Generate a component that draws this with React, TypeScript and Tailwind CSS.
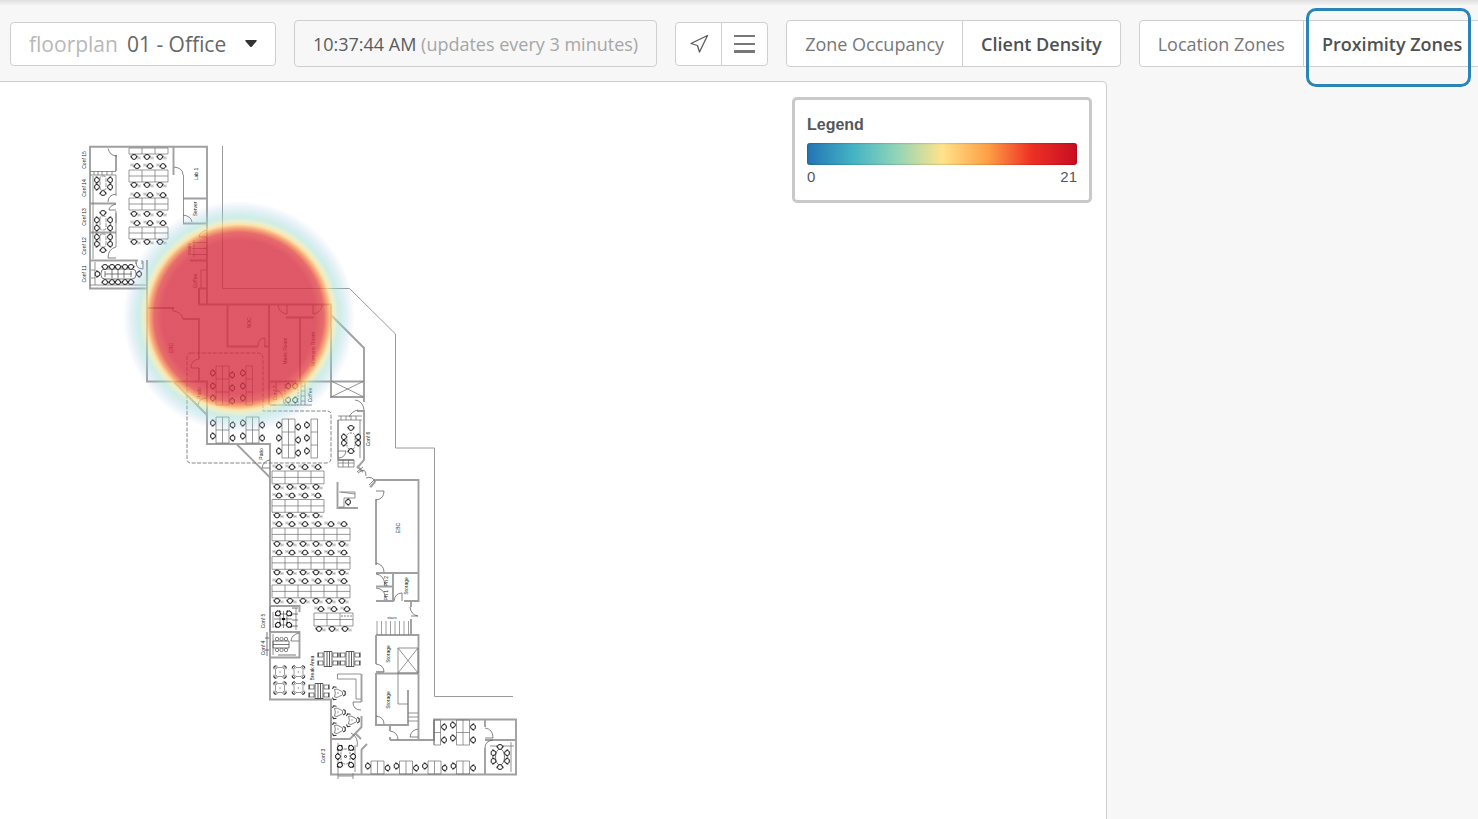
import { clsx } from "clsx";

type Point = [number, number];

const chairPath =
  "M-1.5 -2.3H1.5L2.5 -.6L1.7 1.9Q0 2.9 -1.7 1.9L-2.5 -.6Z M-3.2 -1.2L-2.6 .9 M3.2 -1.2L2.6 .9";

function Chair({ at, turn = 0 }: { at: Point; turn?: number }) {
  return (
    <path
      d={chairPath}
      transform={`translate(${at[0]} ${at[1]}) rotate(${turn})`}
      fill="#fff"
      stroke="#1c1c1c"
      strokeWidth="1"
    />
  );
}

function Chairs({ xs, ys, turn = 0 }: { xs: number[]; ys: number[]; turn?: number }) {
  return (
    <>
      {ys.map((y) => xs.map((x) => <Chair key={`${x}-${y}`} at={[x, y]} turn={turn} />))}
    </>
  );
}

// Chairs with the tiny seat number next to each of them
function NumberedChairs({ xs, ys, side }: { xs: number[]; ys: number[]; side: 1 | -1 }) {
  return (
    <>
      <Chairs xs={xs} ys={ys} turn={side === 1 ? 0 : 180} />
      {ys.map((y) =>
        xs.map((x) => (
          <path
            key={`${x}-${y}`}
            d={`M${x + side * 5 - 1} ${y + side - 1.5}v3m2 -3v3m-2 -1.500h2`}
            stroke="#8a8a8a"
            strokeWidth=".6"
          />
        ))
      )}
    </>
  );
}

function Desks({ x, y, w, h, cols, rows }: { x: number; y: number; w: number; h: number; cols: number; rows: number }) {
  let d = "";
  for (let c = 0; c <= cols; c++) d += `M${x + c * w} ${y}v${h * rows}`;
  for (let r = 0; r <= rows; r++) d += `M${x} ${y + r * h}h${w * cols}`;
  return <path d={d} stroke="#6f6f6f" strokeWidth=".7" />;
}

// Square cafe table with a seat on every corner
function CafeTable({ at }: { at: Point }) {
  return (
    <g transform={`translate(${at[0]} ${at[1]})`} stroke="#333">
      <path d="M-4.500 -2.500L-2.500 -4.500H2.500L4.500 -2.500V2.500L2.500 4.500H-2.500L-4.500 2.500Z" strokeWidth=".5" />
      <path
        d="M-6.300 -3.500Q-6.300 -6.300 -3.500 -6.300M6.300 -3.500Q6.300 -6.300 3.500 -6.300M-6.300 3.500Q-6.300 6.300 -3.500 6.300M6.300 3.500Q6.300 6.300 3.500 6.300"
        strokeWidth="1.100"
      />
      <path d="M-5.800 -2.600L-2.600 -5.800M5.800 -2.600L2.600 -5.800M-5.800 2.600L-2.600 5.800M5.800 2.600L2.600 5.800" strokeWidth=".6" />
      <circle r=".4" strokeWidth=".4" />
    </g>
  );
}

function Bench({ at }: { at: Point }) {
  return (
    <g transform={`translate(${at[0]} ${at[1]})`} stroke="#333" strokeWidth=".8">
      <path d="M-4 -7.5H4V7.5H-4ZM-1 -7.5V7.5M1.5 -7.5V7.5" />
      <path d="M-9.5 -6H-5V-2H-9.5ZM-9.5 2H-5V6H-9.5ZM5 -6H9.5V-2H5ZM5 2H9.5V6H5Z" strokeWidth=".6" />
      <path d="M-10 -6.500V-1.500M-10 1.500V6.500M10 -6.500V-1.500M10 1.500V6.500" strokeWidth="1" />
    </g>
  );
}

function TriTable({ at }: { at: Point }) {
  return (
    <g transform={`translate(${at[0]} ${at[1]})`} stroke="#333">
      <path d="M-3.500 -3.500L-1 -4L4.500 -1.200V1.800L-1 4.500L-3.500 4Q-1.800 0 -3.500 -3.500Z" strokeWidth=".6" />
      <path d="M-5.500 -4L-4.500 -6.200L-1.500 -5.800M-5.500 4.500L-4.500 6.700L-1.500 6.200M5.200 -2.500L7.200 -1.500V1.800L5.200 3" strokeWidth="1.100" />
      <circle r=".4" strokeWidth=".4" />
    </g>
  );
}

function Label({ x, y, children }: { x: number; y: number; children: string }) {
  return (
    <text
      transform={`translate(${x} ${y}) rotate(-90)`}
      textAnchor="middle"
      fontSize="5"
      fill="#222"
      fontFamily='"Liberation Sans", Arial, sans-serif'
    >
      {children}
    </text>
  );
}

const seats4 = [277, 290, 303, 316];
const seats6 = [...seats4, 329, 342];
const shift = (xs: number[], by: number) => xs.map((x) => x + by);

function FloorPlan() {
  return (
    <svg viewBox="76 138 448 646" className="block w-[448px] max-w-full" fill="none" role="img" aria-label="01 - Office floorplan">
      <defs>
        <radialGradient id="density" gradientUnits="userSpaceOnUse" cx="239" cy="317" r="116">
          <stop offset="0" stopColor="#d62c40" stopOpacity=".79" />
          <stop offset=".66" stopColor="#d62c40" stopOpacity=".79" />
          <stop offset=".73" stopColor="#e04040" stopOpacity=".77" />
          <stop offset=".768" stopColor="#f58a4a" stopOpacity=".75" />
          <stop offset=".8" stopColor="#fdd988" stopOpacity=".72" />
          <stop offset=".825" stopColor="#d8e2a8" stopOpacity=".55" />
          <stop offset=".86" stopColor="#9fdccb" stopOpacity=".5" />
          <stop offset=".91" stopColor="#93d0dc" stopOpacity=".32" />
          <stop offset=".96" stopColor="#8fb8dc" stopOpacity=".12" />
          <stop offset="1" stopColor="#7fa8d8" stopOpacity="0" />
        </radialGradient>
      </defs>

      {/* Property line */}
      <path d="M222.5 146V288.5H349.5L395.5 334V448H434.5V696.5H513" stroke="#9a9a9a" />

      {/* Walls */}
      <g stroke="#a0a0a0" strokeWidth="1.9">
        <path d="M147 288.5H90V146.8H207V304M90 203.5H116M90 232.5H116M90 260.5H138M147 260V381.5H207V444H270V699.5H331V774.5H516V719.5H434V740H390M116 155V171M173.5 147V175M183.5 198.5H207M183 223.5H207M190 260.5H207M199 288.5H207M199 288V304.5H331V381M147 308H174M183 319H199V359M199 368V381M207 381V408M227.5 304V346.5H258M264 346.5H269M269 304V405M300 317.5V381M286 317.5H314M269 381.5H364M331 315L364 348V397H331V381M174 382L207 415M237 444.5L270 477.5M270 405H276" />
        <path d="M364 397V402M357 411H364V460L357 468M363 472L357 466M371 487L376 480H418.5V601H404M376 499V565M376 573H418M376 586.5H393M376 601H393V573M411 601V607M411 619V634M376 635H418.5V740H411M376 635V664M376 673.5H418M376 673V725H408V690M376 672H384M370 487L375 482" />
        <path d="M338 420V460M338 460H354M337.500 482V508H358M270 606H299.500V612M270 632H299.500V657.500H270M299.500 643V657M331 739H350L361.500 727V716M361.500 702V674M331 699V740M355 733L361 739M361.500 750V774M361 750L367 744M390 725V731M485 719V727M485 740H516M485 748V774M390 740V737M376 725V715" />
      </g>

      {/* Thin partitions, counters and elevators */}
      <g stroke="#777" strokeWidth=".8">
        <path d="M93 176V259M90 175H116M90 171.500H116M94 171V175M98 171V175M102 171V175M107 171V175M112 171V175M183.500 175V223M116 175V196M116 213V223M116 211V247M90 285H147M91 270H95M91 278H95M95 262V285M136 260V264M142 260V264M201 270V288M201 270H207M199 288V304M192 242.500H207M192 248.500H207M192 254.500H207M194 240V257" />
        <path d="M331 381L364 397M331 397L364 381M398 648H418V673H398ZM398 648L418 673M398 673L418 648M398 673V704H408M408 713H418M408 717H418M408 721H418M337.500 674V679H356V699H361M337.500 674H361" />
        <path d="M377 621V635M381.500 621V635M386 621V635M390.500 621V635M395 621V635M399.500 621V635M404 621V635M408.500 621V635" strokeWidth=".7" />
        <path d="M338 460H354V467H338ZM343 460V467M348.500 460V467M338 463H354M339 492H355V498H344V507H339M341 492L355 494M338 416H362M338 420H362M341 416V420M346 416V420M351 416V420M356 416V420M360 420V458" />
        <path d="M276 405H312M301 381V405M305 381V405M301 386H305M301 391H305M301 396H305M301 401H305M276 382V390M296 608V630M273 612V628M273 634V655M270 606V632M434 720V745M490 746H514M511 742V772M338 743V773M355 745V772M338 776H353M338 773V779M353 773V779" />
      </g>

      {/* Doors */}
      <g stroke="#666" strokeWidth=".8">
        <path d="M108 148.500Q110 156 117 156M116 247Q108 249 108 258H116M116 194Q108 195 108 202M116 204Q109 206 109 210H116M174 167Q183 168 183 175M183 215Q191 216 192 222M207 230Q199 232 199 237H207M136 262Q136 269 143 269V261M173 308V311Q182 312 183 319M191 368Q191 360 199 359M191 368H199M258 346Q258 338 265 338V346M278 305Q279 313 287 314V305M322 305Q321 313 313 314V305" />
        <path d="M198 405Q199 398 207 398M262 468Q263 461 270 460M262 468H270M376 500Q384 499 384 491H376M376 563Q384 565 384 572M376 574Q384 575 385 585M376 588Q385 589 385 597M394 601Q395 593 402 593V601M410 607Q411 615 418 616H411M376 664Q384 665 384 672M299 633Q291 635 291 641H299M376 716Q384 717 384 724M390 731Q398 732 398 740M418 729Q411 730 410 737H418M353 702Q353 710 361 710M353 702H361M485 728Q493 729 493 738H485M493 740Q485 741 485 748" />
        <path d="M355 400Q363 401 364 410M349 417Q352 411 358 410M338 458Q345 458 346 451H338M358 473Q366 466 366 476M366 478Q372 476 375 481M357 472L363 467M369 485L375 479M351 733Q359 737 357 747M276 390Q283 391 284 404" />
      </g>

      {/* Patio awnings */}
      <path
        d="M191 353H258Q263 353 263 358V411H327Q331 411 331 415V458Q331 463 326 463H191Q187 463 187 459V357Q187 353 191 353"
        stroke="#777"
        strokeWidth=".9"
        strokeDasharray="4 1.500"
      />

      {/* North wing */}
      <Desks x={129} y={148} w={13} h={6} cols={3} rows={1} />
      <Desks x={129} y={170} w={13} h={6} cols={3} rows={2} />
      <Desks x={129} y={198} w={13} h={6} cols={3} rows={2} />
      <Desks x={129} y={227} w={13} h={6} cols={3} rows={2} />
      <NumberedChairs xs={[134, 147, 160]} ys={[157, 185, 214, 242]} side={1} />
      <NumberedChairs xs={[137, 150, 163]} ys={[166, 195, 223]} side={-1} />
      <Chairs xs={[97]} ys={[180, 187, 220, 228, 237, 244]} turn={-90} />
      <Chairs xs={[110]} ys={[180, 187, 220, 228, 237, 244]} turn={90} />
      <Chair at={[103, 193]} turn={180} />
      <Chair at={[103, 213]} />
      <Chair at={[103, 250]} turn={180} />
      <g stroke="#666" strokeWidth=".7" strokeDasharray="4 1">
        <rect x="100" y="176" width="6" height="14" rx="2" />
        <rect x="100" y="216" width="6" height="14" rx="2" />
        <rect x="100" y="234" width="6" height="13" rx="2" />
      </g>
      <rect x="101" y="269" width="35" height="10" rx="4" stroke="#555" strokeWidth=".8" />
      <path d="M105 274H132M105 271V277M112 270V278M118 270V278M124 270V278M131 271V277" stroke="#555" strokeWidth=".8" />
      <Chairs xs={[105, 112, 118, 125, 131]} ys={[267]} />
      <Chairs xs={[105, 112, 118, 125, 131]} ys={[282]} turn={180} />
      <Chair at={[97.5, 274]} turn={-90} />
      <Chair at={[139, 274]} turn={90} />

      {/* Patio desks */}
      <Desks x={216} y={366} w={6.5} h={13} cols={2} rows={3} />
      <Desks x={246} y={366} w={6.5} h={13} cols={1} rows={3} />
      <Chairs xs={[213, 243]} ys={[373, 386, 398]} turn={-90} />
      <Chairs xs={[232]} ys={[375, 388, 401]} turn={90} />
      <Desks x={216} y={417} w={6.5} h={13} cols={2} rows={2} />
      <Desks x={246} y={417} w={6.5} h={13} cols={2} rows={2} />
      <Chairs xs={[213, 243]} ys={[423, 436]} turn={-90} />
      <Chairs xs={[232.5, 262]} ys={[425, 438]} turn={90} />
      <Desks x={282} y={419} w={6.5} h={13} cols={2} rows={3} />
      <Desks x={311} y={419} w={6.5} h={13} cols={1} rows={3} />
      <Chairs xs={[279, 307]} ys={[425, 438, 451]} turn={-90} />
      <Chairs xs={[298]} ys={[427, 440, 453]} turn={90} />
      <Chairs xs={[288, 295]} ys={[386, 400]} turn={90} />
      <rect x="285" y="381" width="13" height="24" stroke="#666" strokeWidth=".7" strokeDasharray="2 1" />

      {/* Conf 6 and reception */}
      <rect x="347" y="433" width="8" height="16" rx="3" stroke="#666" strokeWidth=".8" strokeDasharray="2 1" />
      <Chairs xs={[344]} ys={[437, 443]} turn={-90} />
      <Chairs xs={[358]} ys={[437, 443]} turn={90} />
      <Chair at={[351, 428]} />
      <Chair at={[351, 451]} turn={180} />
      <Chair at={[348, 502]} turn={90} />

      {/* Main open area */}
      {[471, 499.5].map((y) => (
        <g key={y}>
          <Desks x={272} y={y} w={13} h={6.4} cols={4} rows={2} />
          <NumberedChairs xs={shift(seats4, 2)} ys={[y - 4]} side={-1} />
          <NumberedChairs xs={seats4} ys={[y + 16]} side={1} />
        </g>
      ))}
      {[528, 556.5, 585].map((y) => (
        <g key={y}>
          <Desks x={272} y={y} w={13} h={6.4} cols={6} rows={2} />
          <NumberedChairs xs={shift(seats6, 2)} ys={[y - 4]} side={-1} />
          <NumberedChairs xs={seats6} ys={[y + 16]} side={1} />
        </g>
      ))}
      <Desks x={314} y={613} w={13} h={6.500} cols={3} rows={2} />
      <NumberedChairs xs={[321, 334, 347]} ys={[609]} side={-1} />
      <NumberedChairs xs={[319, 332, 345]} ys={[629]} side={1} />
      <path d="M342 615v2m3 -2v2m3 -2v2m3 -2v2" stroke="#666" strokeWidth=".8" />

      {/* Conf 5 and Conf 4 */}
      <path d="M280 614H287V625H280ZM274 619H292M283.500 611V628" stroke="#555" strokeWidth=".7" />
      <Chairs xs={[278]} ys={[613.5, 625]} turn={-45} />
      <Chairs xs={[289]} ys={[613.5, 625]} turn={45} />
      <path d="M282 619h3" stroke="#111" strokeWidth="2.200" />
      <path d="M273 641H289V648H273ZM273 644.500H289M267 632V656M265 638H269M265 650H269M278 655H296M292 608H298M292 614H298M292 620H298M292 626H298" stroke="#555" strokeWidth=".8" />
      <g stroke="#666" strokeWidth=".8">
        {[277, 281.5, 286].map((x) => (
          <g key={x}>
            <circle cx={x} cy="639" r="1.700" />
            <circle cx={x} cy="650" r="1.700" />
          </g>
        ))}
      </g>

      {/* Break area */}
      <CafeTable at={[280, 672]} />
      <CafeTable at={[298.5, 672]} />
      <CafeTable at={[280, 688]} />
      <CafeTable at={[298.5, 688]} />
      <Bench at={[328, 659]} />
      <Bench at={[350, 659]} />
      <Bench at={[319, 691]} />
      <TriTable at={[338, 693]} />
      <TriTable at={[338, 712]} />
      <TriTable at={[352, 720]} />
      <TriTable at={[338, 729]} />

      {/* Conf 3 and south wing */}
      <rect x="341" y="749" width="9" height="15" rx="4" stroke="#555" strokeWidth=".8" strokeDasharray="2 1" />
      <circle cx="345.500" cy="756.500" r="1" stroke="#222" />
      <Chairs xs={[340]} ys={[748, 765]} turn={-45} />
      <Chairs xs={[351]} ys={[748, 765]} turn={45} />
      <Chair at={[338, 756.5]} turn={-90} />
      <Chair at={[353, 756.5]} turn={90} />
      {[371, 399.5, 428, 456.5].map((x) => (
        <g key={x}>
          <Desks x={x} y={761} w={6.5} h={13} cols={2} rows={1} />
          <Chair at={[x - 3, 766]} turn={-90} />
          <Chair at={[x + 16.5, 768]} turn={90} />
        </g>
      ))}
      <Desks x={434} y={720} w={6.500} h={12.500} cols={1} rows={2} />
      <Desks x={456.500} y={720} w={6.500} h={12.500} cols={2} rows={2} />
      <Chairs xs={[444, 473]} ys={[727, 740]} turn={90} />
      <Chairs xs={[453]} ys={[725, 738]} turn={-90} />
      <ellipse cx="500" cy="757" rx="4.500" ry="8" stroke="#555" strokeWidth=".8" />
      <Chairs xs={[493.5]} ys={[753, 761]} turn={-90} />
      <Chairs xs={[507]} ys={[753, 761]} turn={90} />
      <Chair at={[500, 747]} />
      <Chair at={[500, 767]} turn={180} />

      <Label x={86} y={160}>Conf 15</Label>
      <Label x={86} y={188}>Conf 14</Label>
      <Label x={86} y={217}>Conf 13</Label>
      <Label x={86} y={246}>Conf 12</Label>
      <Label x={86} y={274}>Conf 11</Label>
      <Label x={198} y={174}>Lab 1</Label>
      <Label x={197} y={209}>Server</Label>
      <Label x={191} y={249}>stairs</Label>
      <Label x={197} y={281}>Coffee</Label>
      <Label x={173} y={348}>EBC</Label>
      <Label x={251} y={323}>NOC</Label>
      <Label x={287} y={351}>Mens Room</Label>
      <Label x={315} y={349}>Womens Room</Label>
      <Label x={201} y={393}>Patio</Label>
      <Label x={277} y={393}>Conf 7</Label>
      <Label x={312} y={395}>Coffee</Label>
      <Label x={263} y={454}>Patio</Label>
      <Label x={370} y={439}>Conf 6</Label>
      <Label x={400} y={528}>EBC</Label>
      <Label x={388} y={581}>Ph 2</Label>
      <Label x={388} y={595}>Ph 1</Label>
      <Label x={408} y={586}>Storage</Label>
      <Label x={265} y={621}>Conf 5</Label>
      <Label x={265} y={648}>Conf 4</Label>
      <Label x={314} y={668}>Break Area</Label>
      <Label x={390} y={654}>Storage</Label>
      <Label x={390} y={700}>Storage</Label>
      <Label x={325} y={756}>Conf 3</Label>
      <text x="392" y="619" textAnchor="middle" fontSize="4" fill="#333" fontFamily='"Liberation Sans", Arial, sans-serif'>
        stairs
      </text>

      <circle cx="239" cy="317" r="116" fill="url(#density)" />
    </svg>
  );
}

function Segmented({ label, options, active }: { label: string; options: string[]; active: string }) {
  return (
    <div role="group" aria-label={label} className="flex h-[47px] shrink-0 overflow-hidden rounded border border-[#cfcfcf] bg-white">
      {options.map((option, i) => (
        <button
          key={option}
          type="button"
          aria-pressed={option === active}
          className={clsx(
            "px-[18px] whitespace-nowrap",
            i > 0 && "border-l border-[#cfcfcf]",
            option === active ? "font-semibold text-[#4f5151]" : "text-[#777]"
          )}
        >
          {option}
        </button>
      ))}
    </div>
  );
}

function Toolbar() {
  return (
    <header className="relative flex items-center gap-[18px] bg-linear-to-b from-[#dfdfdf] to-[#f7f7f7] to-[6px] pt-5 pb-[14px] pl-[10px] text-[18px] leading-6">
      <label className="relative flex h-[44px] shrink-0 items-center rounded border border-[#cfcfcf] bg-white pl-[18px] text-[21px] text-[#b8b8b8]">
        floorplan
        <select className="h-full w-[157px] appearance-none bg-transparent pl-[9px] text-[#666] outline-none" defaultValue="01">
          <option value="01">01 - Office</option>
        </select>
        <svg className="pointer-events-none absolute right-[18px] h-2 w-3" viewBox="0 0 12 8" fill="#333" aria-hidden="true">
          <path d="M1 0H11Q12.500 0 11.500 1.200L7 6.500Q6 7.500 5 6.500L.5 1.200Q-.5 0 1 0Z" />
        </svg>
      </label>

      <div className="flex h-[47px] shrink-0 items-center rounded border border-[#cfcfcf] px-[18px] whitespace-pre text-[#a6a6a6]">
        <time className="text-[#5a5c5c]">10:37:44 AM</time> (updates every 3 minutes)
      </div>

      <div className="flex h-[44px] shrink-0 rounded border border-[#cfcfcf] bg-white">
        <button type="button" aria-label="Locate" className="flex w-[45px] items-center justify-center">
          <svg className="size-[20px]" viewBox="0 0 20 20" fill="none" stroke="#5a5a5a" strokeWidth="1.300" aria-hidden="true">
            <path d="M2 9.500L18.500 1.500L10.500 18L8.500 11.500Z" strokeLinejoin="round" />
          </svg>
        </button>
        <button type="button" aria-label="Menu" className="flex w-[46px] items-center justify-center border-l border-[#cfcfcf]">
          <svg className="h-[18px] w-[21px]" viewBox="0 0 21 18" fill="#777" aria-hidden="true">
            <path d="M0 0H21V2H0ZM0 8H21V10H0ZM0 15H21V18H0Z" />
          </svg>
        </button>
      </div>

      <Segmented label="Map data" options={["Zone Occupancy", "Client Density"]} active="Client Density" />
      <Segmented label="Zone type" options={["Location Zones", "Proximity Zones"]} active="Proximity Zones" />

      {/* Tour highlight around the current step */}
      <div className="pointer-events-none absolute top-2 right-[7px] h-[79px] w-[165px] rounded-[10px] border-3 border-[#2b84b8]" />
    </header>
  );
}

function Legend() {
  return (
    <section className="absolute top-[15px] right-[14px] w-[300px] rounded-[5px] border-3 border-[#c9c9c9] bg-white px-3 pt-3 pb-[14px] font-['Liberation_Sans',Arial,sans-serif] text-[#54585a]">
      <h2 className="text-[16px] leading-[26px] font-bold">Legend</h2>
      <div className="mt-[5px] h-[22px] rounded-[3px] bg-[linear-gradient(90deg,#2274b5,#43b3c5_17%,#8fd5b8_33%,#ffe38a_50%,#fe9f45_67%,#ee3124_83%,#c90c22)] inset-shadow-[0_0_2px_rgba(0,0,0,0.4)]" />
      <div className="flex justify-between pt-[3px] text-[15px] leading-[18px]">
        <span>0</span>
        <span>21</span>
      </div>
    </section>
  );
}

export default function App() {
  return (
    <div className="flex min-h-screen flex-col overflow-hidden bg-[#f7f7f7] font-['Open_Sans','Noto_Sans',sans-serif]">
      <Toolbar />
      <div className="flex flex-1">
        <main className="relative min-w-0 flex-1 rounded-tr-[5px] border-t border-r border-[#cfcfcf] bg-white pt-14 pb-[34px] pl-[76px]">
          <FloorPlan />
          <Legend />
        </main>
        <aside className="w-[371px] shrink-0" />
      </div>
    </div>
  );
}
